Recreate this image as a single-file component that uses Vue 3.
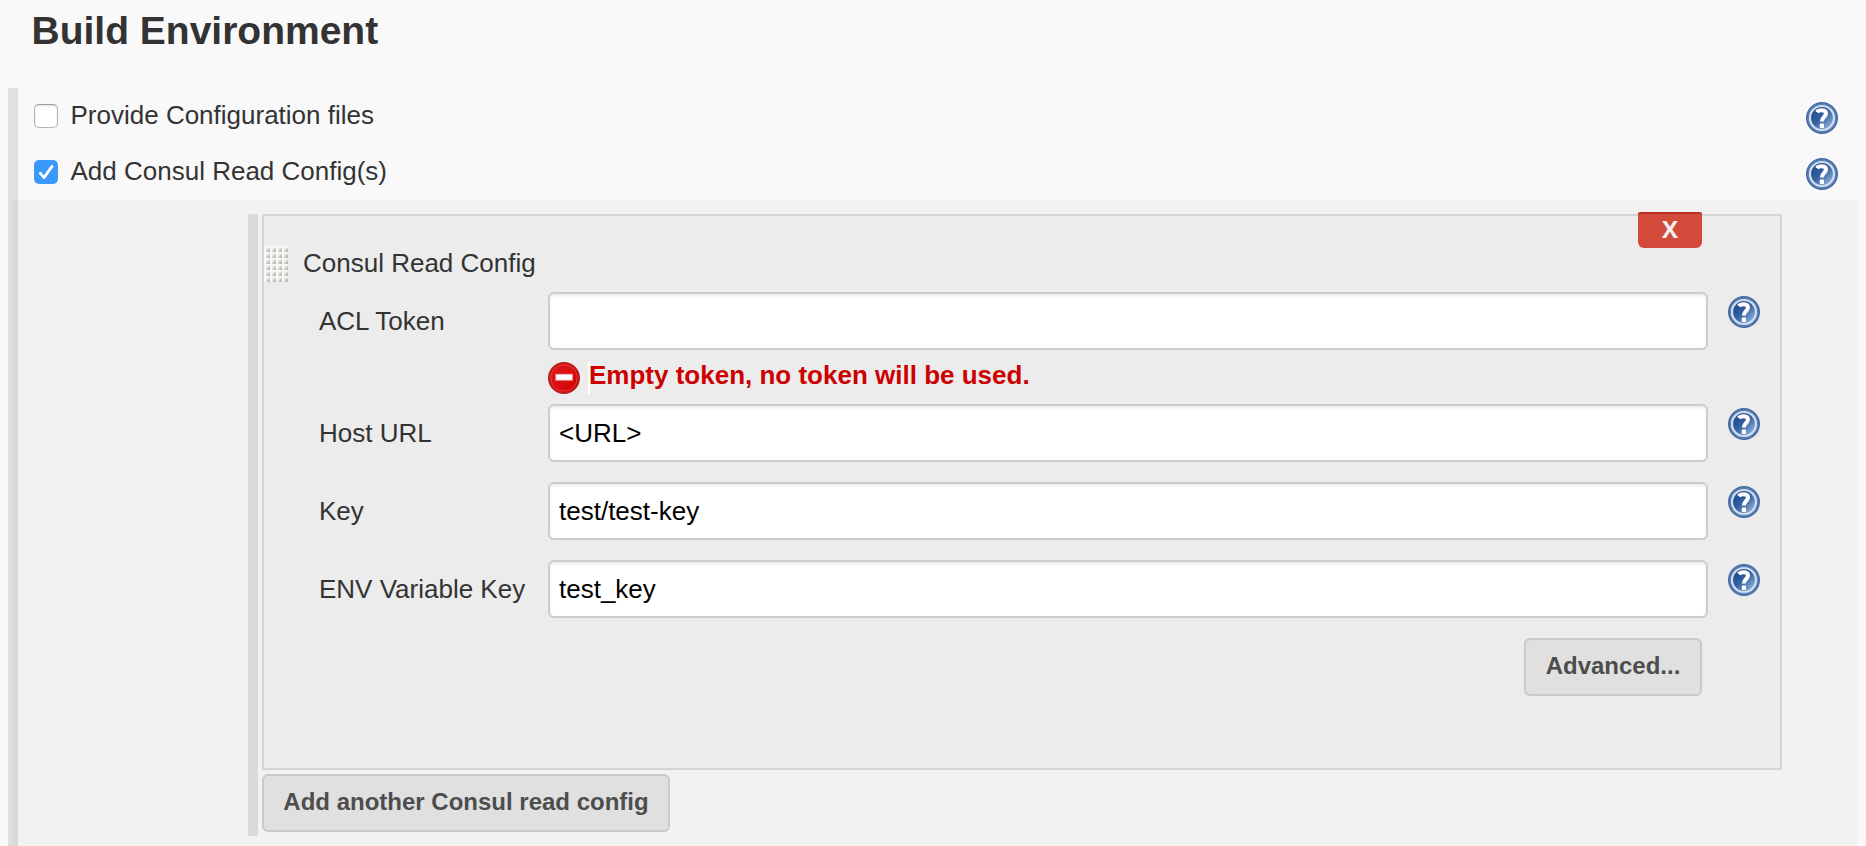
<script setup>
import { h } from 'vue'

const options = [
  { label: 'Provide Configuration files', checked: false },
  { label: 'Add Consul Read Config(s)', checked: true },
]

const fields = [
  { label: 'ACL Token', value: '', error: 'Empty token, no token will be used.' },
  { label: 'Host URL', value: '<URL>' },
  { label: 'Key', value: 'test/test-key' },
  { label: 'ENV Variable Key', value: 'test_key' },
]

const HelpIcon = () =>
  h('svg', { width: 32, height: 32, viewBox: '0 0 32 32' }, [
    h('circle', { cx: 16, cy: 16, r: 15.2, fill: '#5c80b4', stroke: '#456ca6', 'stroke-width': 1.6 }),
    h('circle', { cx: 16, cy: 16, r: 12, fill: 'url(#helpFill)', stroke: '#d3deed', 'stroke-width': 2.2 }),
    h('path', {
      d: 'M10.8 10.2 C12.6 7.6 20 7.2 20 11.6 C20 15 15.8 15 15.8 19.6',
      fill: 'none', stroke: '#fff', 'stroke-width': 4,
    }),
    h('rect', { x: 13.8, y: 21.6, width: 4.2, height: 4.4, rx: 0.8, fill: '#fff' }),
  ])
</script>

<template>
  <main class="page">
    <svg class="defs" width="0" height="0">
      <defs>
        <linearGradient id="helpFill" x1="0.1" y1="0.1" x2="0.85" y2="0.9">
          <stop offset="0.1" stop-color="#1f4a8c" />
          <stop offset="0.5" stop-color="#3662a3" />
          <stop offset="1" stop-color="#8fb0da" />
        </linearGradient>
      </defs>
    </svg>
    <h1 class="title">Build Environment</h1>
    <section class="section">
      <div v-for="o in options" :key="o.label" class="option">
        <span class="check" :class="{ on: o.checked }">
          <svg v-if="o.checked" width="24" height="24" viewBox="0 0 24 24">
            <path d="M6.2 13.2 L10 17.6 L18 6.4" fill="none" stroke="#fff" stroke-width="2.7" stroke-linecap="round" stroke-linejoin="round" />
          </svg>
        </span>
        <span class="option-label">{{ o.label }}</span>
        <HelpIcon class="help" />
      </div>
      <div class="nested">
        <div class="repeat">
          <div class="panel">
            <button class="delete">X</button>
            <header class="panel-head">
              <svg class="grip" width="24" height="36" viewBox="0 0 24 36">
                <defs>
                  <linearGradient id="dot" x1="0" y1="0" x2="1" y2="1">
                    <stop offset="0.2" stop-color="#eeeeec" />
                    <stop offset="0.9" stop-color="#b0b0aa" />
                  </linearGradient>
                </defs>
                <rect width="24" height="36" fill="#f8f8f7" />
                <template v-for="r in 6" :key="r">
                  <rect v-for="c in 4" :key="c" :x="c * 6 - 4" :y="r * 6 - 4.4" width="4" height="4.4" fill="url(#dot)" />
                </template>
              </svg>
              <span>Consul Read Config</span>
            </header>
            <div v-for="f in fields" :key="f.label" class="field" :class="{ bad: f.error }">
              <label class="label">{{ f.label }}</label>
              <div class="control">
                <div class="input">{{ f.value }}</div>
                <div v-if="f.error" class="error">
                  <svg width="32" height="32" viewBox="0 0 32 32">
                    <defs>
                      <linearGradient id="stop" x1="0" y1="0" x2="1" y2="1">
                        <stop offset="0" stop-color="#d81c1c" />
                        <stop offset="0.55" stop-color="#dd0c0c" />
                        <stop offset="1" stop-color="#c60000" />
                      </linearGradient>
                    </defs>
                    <circle cx="16" cy="16" r="15.2" fill="url(#stop)" stroke="#b32020" stroke-width="1.6" />
                    <circle cx="16" cy="16" r="13.2" fill="none" stroke="#e03a3a" stroke-width="1" />
                    <rect x="7.8" y="12.2" width="16.6" height="6" fill="#fff" stroke="#f0a0a0" stroke-width="0.8" />
                  </svg>
                  <span class="error-text">{{ f.error }}</span>
                </div>
              </div>
              <HelpIcon class="field-help" />
            </div>
            <div class="actions"><button class="btn advanced">Advanced...</button></div>
          </div>
          <button class="btn add">Add another Consul read config</button>
        </div>
      </div>
    </section>
  </main>
</template>

<style>
body {
  background: #f9f9f9;
}
</style>

<style scoped>
.page {
  width: 1866px;
  height: 846px;
  overflow: hidden;
  box-sizing: border-box;
  display: flex;
  flex-direction: column;
  background: #f9f9f9;
  color: #333;
  font: 26px/30px "Liberation Sans", Arial, sans-serif;
}
.defs {
  position: absolute;
}
.title {
  box-sizing: border-box;
  margin: 0;
  padding: 9px 0 0 31.5px;
  height: 88px;
  font-size: 39px;
  line-height: 44px;
}
.section {
  flex: 1;
  margin-left: 8px;
  padding-right: 8px;
  display: flex;
  flex-direction: column;
  background: linear-gradient(to right, #e0e0e0 10px, transparent 10px);
}
.option {
  height: 56px;
  display: flex;
  box-sizing: border-box;
  padding: 12px 20px 0 26px;
}
.check {
  width: 24px;
  height: 24px;
  margin-top: 4px;
  box-sizing: border-box;
  border: 1px solid #b4b4b4;
  border-top-color: #9d9d9d;
  border-radius: 5px;
  background: #fff;
  box-shadow: inset 0 1px 2px #ddd;
}
.check.on {
  border: 0;
  background: #3b99fc;
  box-shadow: none;
}
.check svg {
  display: block;
}
.option-label {
  flex: 1;
  margin-left: 12.5px;
}
.help {
  margin-top: 2px;
}
.nested {
  flex: 1;
  margin-left: 4px;
  padding: 14px 76px 0 236px;
  background: rgba(0, 0, 0, 0.028);
}
.repeat {
  height: 622px;
  box-sizing: border-box;
  border-left: 10px solid #dadada;
  padding-left: 4px;
}
.panel {
  position: relative;
  height: 556px;
  box-sizing: border-box;
  border: 2px solid #d4d4d4;
  background: #ececec;
}
.delete {
  position: absolute;
  top: -4px;
  right: 78px;
  width: 64px;
  height: 36px;
  padding: 0 0 4px;
  border: 0;
  border-top: 2px solid #bd3226;
  border-radius: 2px 2px 6px 6px;
  background: #d34a3a;
  color: #f3efef;
  font: bold 24px/30px "Open Sans", sans-serif;
}
.panel-head {
  display: flex;
  padding-top: 30px;
  height: 46px;
  gap: 15px;
}
.panel-head span {
  padding-top: 2px;
}
.grip {
  flex: none;
}
.field {
  display: grid;
  grid-template-columns: 229px 1160px 32px;
  column-gap: 0;
  height: 78px;
  padding-left: 55px;
}
.field.bad {
  height: 112px;
}
.label {
  padding-top: 14px;
}
.input {
  height: 58px;
  box-sizing: border-box;
  border: 2px solid #ccc;
  border-radius: 6px;
  padding: 12px 9px;
  background: #fff;
  box-shadow: inset 0 2px 3px #ececec;
  color: #000;
}
.field-help {
  margin: 4px 0 0 20px;
}
.error {
  display: flex;
  padding-top: 12px;
  color: #c00;
  font-weight: bold;
}
.error-text {
  margin-left: 8px;
  height: 32px;
  border-left: 2px solid #fff;
  line-height: 26px;
  text-indent: -1px;
}
.actions {
  display: flex;
  justify-content: flex-end;
  padding-right: 78px;
}
.btn {
  height: 58px;
  padding: 0 0 2px;
  border: 2px solid #c9c9c9;
  border-radius: 6px;
  background: #e0e0e0;
  color: #4d4d4d;
  font: bold 24px/28px "Liberation Sans", Arial, sans-serif;
  white-space: nowrap;
}
.advanced {
  width: 178px;
}
.add {
  display: block;
  width: 408px;
  margin-top: 4px;
}
</style>
